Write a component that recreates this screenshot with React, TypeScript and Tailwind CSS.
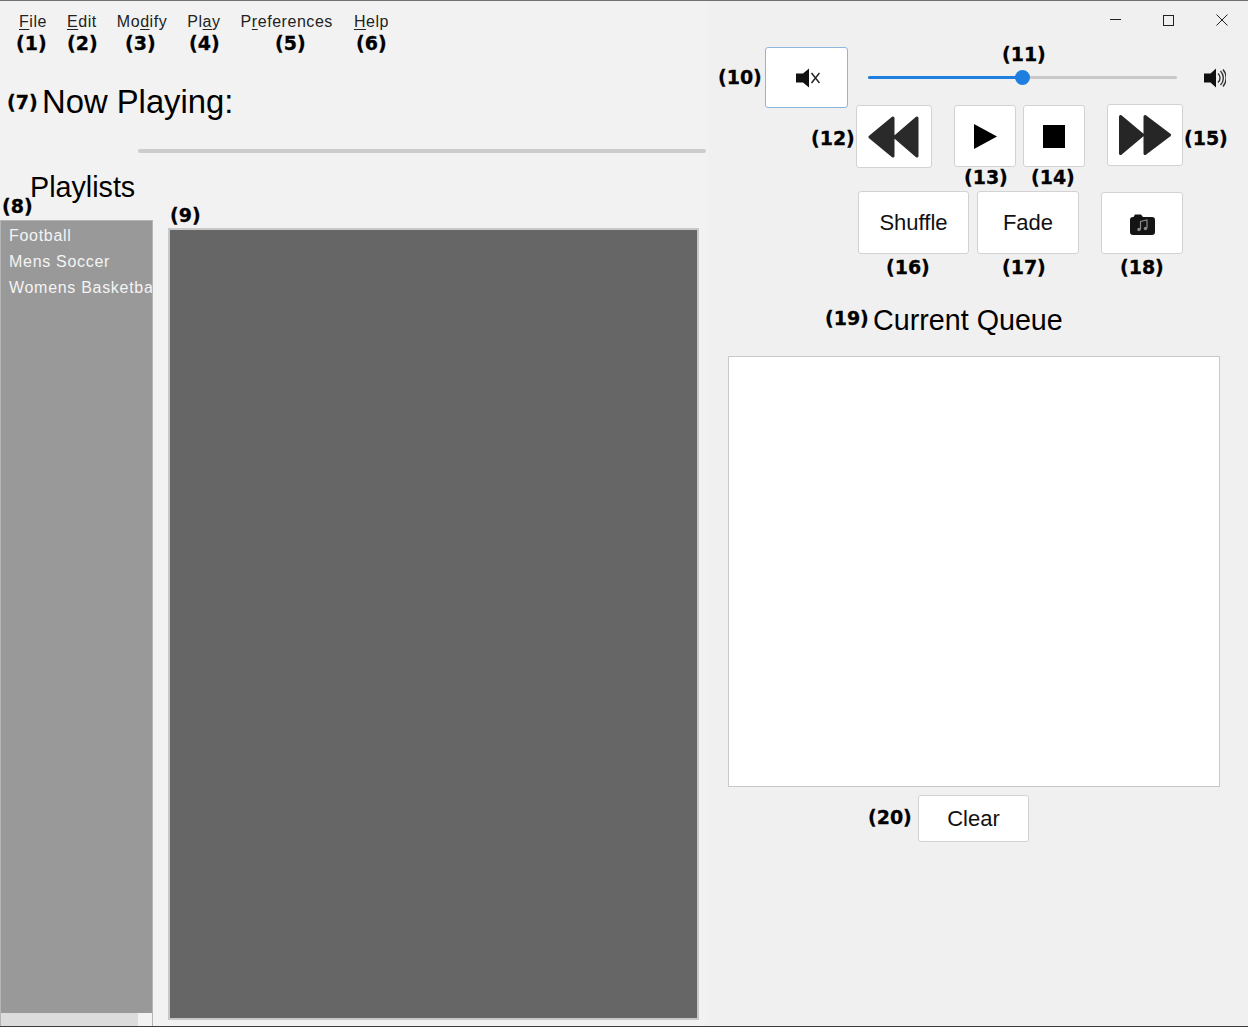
import React from "react";

const sans = "font-['Liberation_Sans',Arial,sans-serif]";

function Note({ children, className }: { children: React.ReactNode; className: string }) {
  return (
    <span className={`absolute whitespace-nowrap font-['DejaVu_Sans',sans-serif] text-[19px] leading-[22px] font-bold text-black [-webkit-text-stroke:0.3px_#000] ${className}`}>
      {children}
    </span>
  );
}

function Btn({ children, className }: { children: React.ReactNode; className: string }) {
  return (
    <button className={`flex shrink-0 items-center justify-center rounded-[3px] border bg-white text-[22px] text-[#111111] ${sans} ${className}`}>
      {children}
    </button>
  );
}

function MenuItem({ pre, u, post, className }: { pre?: string; u: string; post?: string; className?: string }) {
  return (
    <span className={className}>
      {pre}
      <span className="underline underline-offset-2">{u}</span>
      {post}
    </span>
  );
}

export default function App() {
  return (
    <div className={`relative flex h-[1027px] w-[1248px] flex-col overflow-hidden bg-[#f2f2f2] ${sans}`}>
      <div className="h-px bg-[#707070]" />
      <div className="flex min-h-0 flex-1">
        {/* Left side */}
        <div className="flex w-[708px] shrink-0 flex-col">
          <nav className="flex h-[41px] items-center gap-5 pl-[19px] text-[16px] tracking-[0.55px] text-[#222222]">
            <MenuItem u="F" post="ile" />
            <MenuItem u="E" post="dit" />
            <MenuItem pre="Mo" u="d" post="ify" />
            <MenuItem pre="Pl" u="a" post="y" />
            <MenuItem pre="P" u="r" post="eferences" />
            <MenuItem u="H" post="elp" className="ml-[1px]" />
          </nav>
          <h1 className="mt-[40px] ml-[42px] text-[32.8px] leading-[40px] font-normal text-black">Now Playing:</h1>
          <div className="mt-[27px] ml-[138px] h-[4px] w-[568px] rounded-full bg-[#cdcdcd]" />
          <h2 className="mt-[16px] ml-[30px] text-[28.7px] leading-[36px] font-normal text-black">Playlists</h2>
          <div className="mt-[15px] flex min-h-0 flex-1 items-start">
            <div className="flex h-[806px] w-[153px] shrink-0 flex-col border-x border-t border-[#b5b5b5]">
              <ul className="flex-1 overflow-hidden bg-[#999999] pt-[2px] pl-[8px] text-[16px] leading-[26px] tracking-[0.7px] whitespace-nowrap text-[#f4f4f4]">
                <li>Football</li>
                <li>Mens Soccer</li>
                <li>Womens Basketball</li>
              </ul>
              <div className="h-[13px] bg-[#f2f2f2]">
                <div className="h-full w-[137px] bg-[#dcdcdc]" />
              </div>
            </div>
            <div className="mt-[8px] ml-[15px] h-[792px] w-[531px] border-2 border-[#c8c8c8] bg-[#666666]" />
          </div>
        </div>

        {/* Right side */}
        <div className="flex flex-1 flex-col bg-[#f0f0f0]">
          <div className="flex h-[46px] items-start justify-end">
            <div className="mt-[12px] mr-[20px] flex items-center gap-[42px]">
              <svg width="11" height="14" viewBox="0 0 11 14"><path d="M0 6.500h11" stroke="#222" strokeWidth="1" /></svg>
              <svg width="11" height="11" viewBox="0 0 11 11"><rect x="0.500" y="0.500" width="10" height="10" fill="none" stroke="#222" strokeWidth="1" /></svg>
              <svg width="12" height="12" viewBox="0 0 12 12"><path d="M0.500 0.500l11 11M11.500 0.500l-11 11" stroke="#222" strokeWidth="1" /></svg>
            </div>
          </div>

          <div className="flex items-center pl-[57px]">
            <Btn className="h-[61px] w-[83px] border-[#8db6de]">
              <svg className="ml-[2px] blur-[0.3px]" width="24" height="20" viewBox="0 0 24 20">
                <path d="M0 5.500h7L13 0.500v19L7 14.500H0z" fill="#111" />
                <path d="M15.500 5l8 10M23.500 5l-8 10" stroke="#222" strokeWidth="1.500" />
              </svg>
            </Btn>
            <div className="relative ml-[20px] h-[3px] w-[309px] rounded-full bg-[#c9c9c9]">
              <div className="h-full w-[154px] rounded-full bg-[#1e7fe0]" />
              <div className="absolute top-[-6px] left-[147px] h-[15px] w-[15px] rounded-full bg-[#1e7fe0]" />
            </div>
            <svg className="ml-[27px] blur-[0.3px]" width="22" height="20" viewBox="0 0 22 20">
              <path d="M0 5.500h6.500L12 0.500v19L6.500 14.500H0z" fill="#111" />
              <path d="M14 5.500a6 6 0 0 1 0 9M16.500 3a10 10 0 0 1 0 14M19 1.500a13 13 0 0 1 0 17" fill="none" stroke="#333" strokeWidth="1.400" />
            </svg>
          </div>

          <div className="-mt-[3px] flex items-start pl-[148px]">
            <Btn className="h-[63px] w-[76px] border-[#d2d2d2]">
              <svg className="blur-[0.3px]" width="52" height="42" viewBox="0 0 52 42">
                <path d="M25 2L2 21l23 19zM49 2L27 21l22 19z" fill="#2a2a2a" stroke="#2a2a2a" strokeWidth="3" strokeLinejoin="round" />
              </svg>
            </Btn>
            <Btn className="ml-[22px] h-[62px] w-[62px] border-[#d2d2d2]">
              <svg width="25" height="27" viewBox="0 0 25 27"><path d="M1 1l23 12.500L1 26z" fill="#000" /></svg>
            </Btn>
            <Btn className="ml-[7px] h-[62px] w-[62px] border-[#d2d2d2]">
              <div className="h-[23px] w-[22px] bg-black" />
            </Btn>
            <Btn className="-mt-[1px] ml-[22px] h-[62px] w-[76px] border-[#d2d2d2]">
              <svg className="blur-[0.3px]" width="52" height="40" viewBox="0 0 52 40">
                <path d="M1.500 1.500l22 18.500-22 18.500zM26 1.500L50.500 20 26 38.500z" fill="#262626" stroke="#262626" strokeWidth="3" strokeLinejoin="round" />
              </svg>
            </Btn>
          </div>

          <div className="mt-[23px] flex items-start pl-[150px]">
            <Btn className="h-[63px] w-[111px] border-[#d2d2d2]">Shuffle</Btn>
            <Btn className="ml-[8px] h-[63px] w-[102px] border-[#d2d2d2]">Fade</Btn>
            <Btn className="mt-[1px] ml-[22px] h-[62px] w-[82px] border-[#d2d2d2]">
              <svg className="mt-[3px] blur-[0.4px]" width="25" height="21" viewBox="0 0 25 21">
                <path d="M0 6q0-3 3-3h0.500L5 0.500h6l2 2.500h9q3 0 3 3v12q0 3-3 3H3q-3 0-3-3z" fill="#141414" />
                <path d="M10.500 15V7.500l6.500-1.500v8" fill="none" stroke="#8a8a8a" strokeWidth="1.200" />
                <circle cx="9" cy="15.500" r="1.700" fill="#8a8a8a" />
                <circle cx="15.500" cy="14.500" r="1.700" fill="#8a8a8a" />
              </svg>
            </Btn>
          </div>

          <h2 className="mt-[48px] ml-[165px] text-[28.700px] leading-[36px] font-normal text-black">Current Queue</h2>
          <div className="mt-[18px] ml-[20px] h-[431px] w-[492px] border border-[#c8c8c8] bg-white" />
          <Btn className="mt-[8px] ml-[210px] h-[47px] w-[111px] border-[#d2d2d2]">Clear</Btn>
        </div>
      </div>
      <div className="h-px bg-[#3c3c3c]" />

      <Note className="top-[32px] left-[16px]">(1)</Note>
      <Note className="top-[32px] left-[67px]">(2)</Note>
      <Note className="top-[32px] left-[125px]">(3)</Note>
      <Note className="top-[32px] left-[189px]">(4)</Note>
      <Note className="top-[32px] left-[275px]">(5)</Note>
      <Note className="top-[32px] left-[356px]">(6)</Note>
      <Note className="top-[91px] left-[7px]">(7)</Note>
      <Note className="top-[195px] left-[2px]">(8)</Note>
      <Note className="top-[204px] left-[170px]">(9)</Note>
      <Note className="top-[66px] left-[718px]">(10)</Note>
      <Note className="top-[43px] left-[1002px]">(11)</Note>
      <Note className="top-[127px] left-[811px]">(12)</Note>
      <Note className="top-[166px] left-[964px]">(13)</Note>
      <Note className="top-[166px] left-[1031px]">(14)</Note>
      <Note className="top-[127px] left-[1184px]">(15)</Note>
      <Note className="top-[256px] left-[886px]">(16)</Note>
      <Note className="top-[256px] left-[1002px]">(17)</Note>
      <Note className="top-[256px] left-[1120px]">(18)</Note>
      <Note className="top-[307px] left-[825px]">(19)</Note>
      <Note className="top-[806px] left-[868px]">(20)</Note>
    </div>
  );
}
